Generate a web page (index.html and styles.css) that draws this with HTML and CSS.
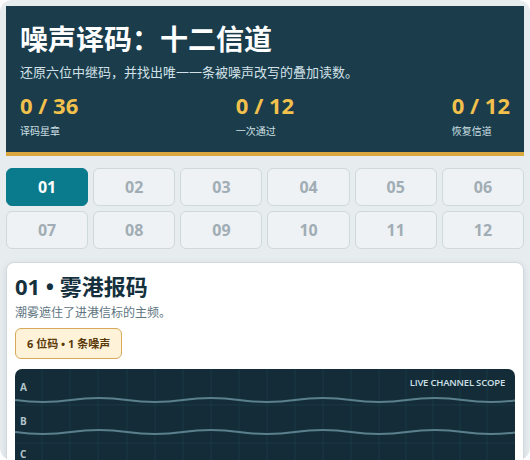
FILE: index.html
```html
<!DOCTYPE html>
<html lang="zh-CN">
<head>
    <meta charset="UTF-8">
    <meta name="viewport" content="width=device-width, initial-scale=1.0">
    <title>噪声译码：十二信道</title>
    <link rel="stylesheet" href="styles.css">
</head>
<body>
    <div class="app">
        <header class="hero">
            <h1>噪声译码：十二信道</h1>
            <p class="hero-sub">还原六位中继码，并找出唯一一条被噪声改写的叠加读数。</p>
            <div class="stats">
                <div class="stat">
                    <div class="stat-value">0 / 36</div>
                    <div class="stat-label">译码星章</div>
                </div>
                <div class="stat">
                    <div class="stat-value">0 / 12</div>
                    <div class="stat-label">一次通过</div>
                </div>
                <div class="stat">
                    <div class="stat-value">0 / 12</div>
                    <div class="stat-label">恢复信道</div>
                </div>
            </div>
        </header>

        <nav class="channels">
            <button class="channel active">01</button>
            <button class="channel">02</button>
            <button class="channel">03</button>
            <button class="channel">04</button>
            <button class="channel">05</button>
            <button class="channel">06</button>
            <button class="channel">07</button>
            <button class="channel">08</button>
            <button class="channel">09</button>
            <button class="channel">10</button>
            <button class="channel">11</button>
            <button class="channel">12</button>
        </nav>

        <section class="level">
            <h2>01 • 雾港报码</h2>
            <p class="level-sub">潮雾遮住了进港信标的主频。</p>
            <span class="badge">6 位码 • 1 条噪声</span>

            <div class="scope">
                <span class="scope-title">LIVE CHANNEL SCOPE</span>
                <svg class="scope-svg" viewBox="0 0 500 130" width="500" height="130">
                    <g stroke="#1b3845" stroke-width="1">
                        <line x1="27" y1="0" x2="27" y2="130"/>
                        <line x1="55" y1="0" x2="55" y2="130"/>
                        <line x1="83" y1="0" x2="83" y2="130"/>
                        <line x1="112" y1="0" x2="112" y2="130"/>
                        <line x1="140" y1="0" x2="140" y2="130"/>
                        <line x1="168" y1="0" x2="168" y2="130"/>
                        <line x1="196" y1="0" x2="196" y2="130"/>
                        <line x1="224" y1="0" x2="224" y2="130"/>
                        <line x1="252" y1="0" x2="252" y2="130"/>
                        <line x1="280" y1="0" x2="280" y2="130"/>
                        <line x1="308" y1="0" x2="308" y2="130"/>
                        <line x1="336" y1="0" x2="336" y2="130"/>
                        <line x1="364" y1="0" x2="364" y2="130"/>
                        <line x1="391" y1="0" x2="391" y2="130"/>
                        <line x1="418" y1="0" x2="418" y2="130"/>
                        <line x1="445" y1="0" x2="445" y2="130"/>
                        <line x1="472" y1="0" x2="472" y2="130"/>
                        <line x1="0" y1="36" x2="500" y2="36"/>
                        <line x1="0" y1="74" x2="500" y2="74"/>
                        <line x1="0" y1="112" x2="500" y2="112"/>
                    </g>
                    <!-- one carrier per channel row -->
                    <g fill="none" stroke="#5a808d" stroke-width="2">
                        <path d="M0 31 Q14 33 28 33 T56 31 T84 29 T112 31 T140 33 T168 31 T196 29 T224 31 T252 33 T280 31 T308 29 T336 31 T364 33 T392 31 T420 29 T448 31 T476 33 T504 31"/>
                        <path d="M0 63 Q14 65 28 65 T56 63 T84 61 T112 63 T140 65 T168 63 T196 61 T224 63 T252 65 T280 63 T308 61 T336 63 T364 65 T392 63 T420 61 T448 63 T476 65 T504 63"/>
                        <path d="M0 96 Q14 98 28 98 T56 96 T84 94 T112 96 T140 98 T168 96 T196 94 T224 96 T252 98 T280 96 T308 94 T336 96 T364 98 T392 96 T420 94 T448 96 T476 98 T504 96"/>
                    </g>
                    <g class="scope-labels" fill="#b3c4cb">
                        <text x="5" y="22">A</text>
                        <text x="5" y="56">B</text>
                        <text x="5" y="89">C</text>
                    </g>
                </svg>
            </div>
        </section>
    </div>
</body>
</html>
```

FILE: styles.css
```css
/* Reset */
* {
  margin: 0;
  padding: 0;
  box-sizing: border-box;
}

html {
  background-color: #ffffff;
}

body {
  font-family: "Open Sans", "Noto Sans CJK SC", sans-serif;
  color: #15303d;
}

/* App shell */
.app {
  height: 460px;
  overflow: hidden;
  background-color: #e7ecef;
  border-radius: 12px;
  padding: 6px;
}

/* Hero header */
.hero {
  background-color: #1a3c4b;
  border-bottom: 4px solid #dba73f;
  padding: 16px 14px 14px;
  color: #ffffff;
}

.hero h1 {
  font-size: 28px;
  line-height: 34px;
  font-weight: 700;
}

.hero-sub {
  margin-top: 7px;
  font-size: 13px;
  line-height: 18px;
  color: #d3e2e8;
}

.stats {
  display: flex;
  justify-content: space-between;
  margin-top: 10px;
}

.stat-value {
  font-size: 22px;
  line-height: 28px;
  font-weight: 700;
  color: #f2c04c;
}

.stat-label {
  margin-top: 5px;
  font-size: 10px;
  line-height: 14px;
  color: #cfe0e6;
}

/* Channel picker */
.channels {
  display: grid;
  grid-template-columns: repeat(6, 1fr);
  gap: 5px;
  margin-top: 12px;
}

.channel {
  height: 38px;
  font-family: inherit;
  font-size: 16px;
  font-weight: 700;
  color: #a1adb4;
  background-color: #eef2f5;
  border: 1px solid #cfd8dc;
  border-radius: 6px;
  cursor: pointer;
}

.channel.active {
  background-color: #0a7b8d;
  border-color: #0a7b8d;
  color: #ffffff;
}

/* Level card */
.level {
  margin-top: 13px;
  background-color: #ffffff;
  border: 1px solid #d2dadf;
  border-radius: 8px;
  box-shadow: 0 2px 6px rgba(30, 60, 75, 0.12);
  padding: 9px 8px 20px;
}

.level h2 {
  font-size: 22px;
  line-height: 28px;
  font-weight: 700;
  color: #15303d;
}

.level-sub {
  margin-top: 4px;
  font-size: 12px;
  line-height: 18px;
  color: #5e7581;
}

.badge {
  display: inline-block;
  margin-top: 6px;
  height: 31px;
  line-height: 29px;
  padding: 0 11px;
  font-size: 11px;
  font-weight: 700;
  color: #5a3908;
  background-color: #fef2d8;
  border: 1px solid #d8a95b;
  border-radius: 6px;
}

/* Scope */
.scope {
  position: relative;
  margin-top: 10px;
  height: 130px;
  background-color: #132c38;
  border-radius: 7px;
  overflow: hidden;
}

.scope-svg {
  display: block;
}

.scope-labels {
  font-family: "Open Sans", sans-serif;
  font-size: 10px;
  font-weight: 700;
}

.scope-title {
  position: absolute;
  top: 7px;
  right: 10px;
  font-size: 9.5px;
  font-weight: 600;
  letter-spacing: -0.2px;
  color: #cfe0e6;
}
```
